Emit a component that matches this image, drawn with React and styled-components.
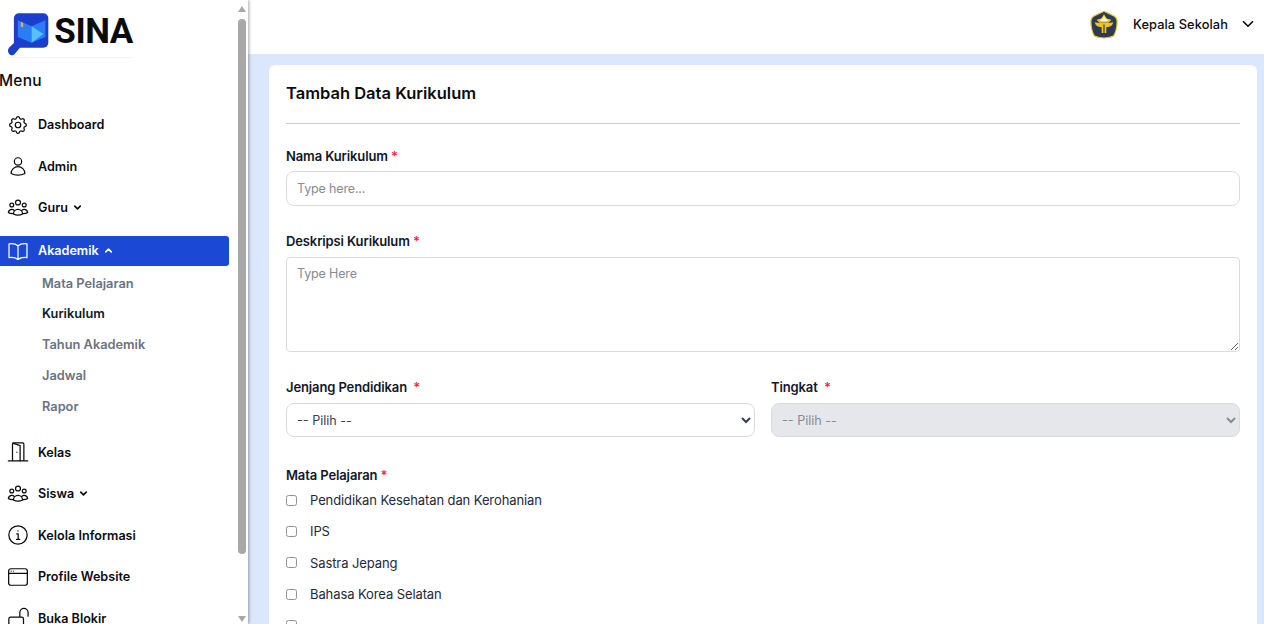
import styled, { createGlobalStyle } from 'styled-components'
import { ChevronDown, ChevronUp } from 'lucide-react'

const GlobalStyle = createGlobalStyle`
    * {
        box-sizing: border-box;
    }

    html, body {
        margin: 0;
        height: 100%;
        overflow: hidden;
        font-family: "Inter", "Liberation Sans", sans-serif;
        color: #0b0b0f;
    }
`

const Icons = {
    gear: (
        <>
            <path d="M10.3 4.3c.4-1.8 3-1.8 3.4 0a1.7 1.7 0 0 0 2.6 1.1c1.5-.9 3.3.8 2.4 2.4a1.7 1.7 0 0 0 1 2.5c1.900.5 1.900 3 0 3.400a1.700 1.700 0 0 0-1 2.600c.9 1.500-.9 3.300-2.400 2.400a1.700 1.700 0 0 0-2.600 1c-.4 1.900-3 1.900-3.400 0a1.700 1.700 0 0 0-2.600-1c-1.500.9-3.300-.9-2.400-2.400a1.700 1.700 0 0 0-1-2.600c-1.900-.4-1.900-2.900 0-3.400a1.700 1.700 0 0 0 1-2.500c-.9-1.600.9-3.300 2.400-2.400a1.700 1.700 0 0 0 2.600-1.100Z" />
            <circle cx="12" cy="12" r="3" />
        </>
    ),
    user: (
        <>
            <circle cx="12" cy="7" r="4" />
            <path d="M4.500 20.100a7.500 7.500 0 0 1 15 0c-2 1.200-4.600 1.900-7.500 1.900s-5.500-.7-7.500-1.900Z" />
        </>
    ),
    group: (
        <>
            <circle cx="12" cy="6" r="2.700" />
            <circle cx="5.200" cy="8.800" r="2.100" />
            <circle cx="18.800" cy="8.800" r="2.100" />
            <path d="M7 18.500a5 5 0 0 1 10 0c-1.400.8-3.100 1.300-5 1.300s-3.600-.5-5-1.300Z" />
            <path d="M6.800 18.200C4.700 18.300 2.700 17.800 1.500 16.800c.3-2 1.800-3.400 3.700-3.400 1 0 2 .4 2.600 1.100" />
            <path d="M17.200 18.200c2.100.1 4.100-.4 5.300-1.400-.3-2-1.800-3.400-3.700-3.400-1 0-2 .4-2.600 1.100" />
        </>
    ),
    book: (
        <path d="M12 6.200C10.200 4.800 7.600 4 4.800 4c-1 0-1.800.1-2.600.3v15c.8-.2 1.600-.3 2.600-.3 2.800 0 5.400.8 7.200 2.200m0-15c1.800-1.400 4.400-2.200 7.200-2.200 1 0 1.800.1 2.600.3v15c-.8-.2-1.600-.3-2.600-.3-2.800 0-5.400.8-7.200 2.200m0-15v15" />
    ),
    door: (
        <>
            <path d="M1.500 21.800h21M6 21.800V3.500c0-.8.600-1.400 1.400-1.400h9.600c.8 0 1.400.6 1.400 1.400v18.300" />
            <path d="M6.300 2.400 14.300 5v16.800M10.800 12.200h.01" />
        </>
    ),
    info: (
        <>
            <circle cx="12" cy="12" r="10" />
            <path d="M10.600 10.800H12.200v6M10.400 16.800h3.500M11.900 7.600h.1" />
        </>
    ),
    browser: (
        <>
            <rect x="1.800" y="3" width="20.400" height="18" rx="2.400" />
            <path d="M1.800 8h20.400" />
            <path d="M4.500 5.500h.01M7 5.500h.01" />
        </>
    ),
    unlock: (
        <path d="M14 11V6a4.500 4.500 0 0 1 9 0v4M2 13a2 2 0 0 1 2-2h12a2 2 0 0 1 2 2v7a2 2 0 0 1-2 2H4a2 2 0 0 1-2-2Z" />
    ),
}

const menuTop = [
    { icon: 'gear', label: 'Dashboard' },
    { icon: 'user', label: 'Admin' },
    { icon: 'group', label: 'Guru', chevron: true },
]

const subMenu = ['Mata Pelajaran', 'Kurikulum', 'Tahun Akademik', 'Jadwal', 'Rapor']

const menuBottom = [
    { icon: 'door', label: 'Kelas' },
    { icon: 'group', label: 'Siswa', chevron: true },
    { icon: 'info', label: 'Kelola Informasi' },
    { icon: 'browser', label: 'Profile Website' },
    { icon: 'unlock', label: 'Buka Blokir' },
]

const subjects = [
    'Pendidikan Kesehatan dan Kerohanian',
    'IPS',
    'Sastra Jepang',
    'Bahasa Korea Selatan',
]

function MenuIcon({ name }) {
    return (
        <IconSvg viewBox="0 0 24 24">
            {Icons[name]}
        </IconSvg>
    )
}

function MenuEntry({ item }) {
    return (
        <MenuRow>
            <MenuIcon name={item.icon} />
            <span>{item.label}</span>
            {item.chevron && <ChevronDown size={11} strokeWidth={3.500} />}
        </MenuRow>
    )
}

function App() {
    return (
        <>
            <GlobalStyle />
            <Page>
                <Sidebar>
                    <LogoRow>
                        <svg width="42" height="43" viewBox="0 0 42 43">
                            <path d="M1.500 41.500c-2-2-2-5 0-7l6-5.500 5 5.500-5.500 6.500c-1.700 1.800-3.900 2.100-5.500.5Z" fill="#1b3fcb" />
                            <rect x="6" y="0" width="35" height="35" rx="5" fill="#1b3fcb" />
                            <path d="M10 7l14 6v17l-14-6Z" fill="#2b7df5" />
                            <path d="M24 13l14-6v17l-14 6Z" fill="#2b7df5" />
                            <path d="M24 13l12 8-12 9Z" fill="#55c0fc" />
                            <path d="M13 8.500l2.500 1v5l-1.200-1-1.300.3Z" fill="#f0a63a" />
                        </svg>
                        <LogoText>SINA</LogoText>
                    </LogoRow>
                    <MenuTitle>Menu</MenuTitle>
                    <MenuList>
                        {menuTop.map((item) => (
                            <MenuEntry key={item.label} item={item} />
                        ))}
                    </MenuList>
                    <ActiveRow>
                        <MenuIcon name="book" />
                        <span>Akademik</span>
                        <ChevronUp size={11} strokeWidth={3.500} />
                    </ActiveRow>
                    <SubList>
                        {subMenu.map((label) => (
                            <SubItem key={label} $current={label === 'Kurikulum'}>{label}</SubItem>
                        ))}
                    </SubList>
                    <MenuList>
                        {menuBottom.map((item) => (
                            <MenuEntry key={item.label} item={item} />
                        ))}
                    </MenuList>
                    <ScrollBar>
                        <ScrollArrow />
                        <ScrollThumb />
                        <ScrollArrow $down />
                    </ScrollBar>
                </Sidebar>
                <Main>
                    <Header>
                        <svg width="28" height="29" viewBox="0 0 30 30">
                            <path d="M15 .8 25 5.500c2.500 1.200 4 3.500 4 6.200 0 6-1.500 11.500-3.500 15.300-3 1.800-6.500 2.400-10.500 2.400s-7.500-.6-10.500-2.400C2.500 23.200 1 17.700 1 11.700c0-2.700 1.500-5 4-6.200Z" fill="#2b3a55" stroke="#e8c32a" strokeWidth="1.200" />
                            <path d="M15 4l3 4.500 5 1.500-3 3H10l-3-3 5-1.500Z" fill="#f0c419" />
                            <path d="M15 6l1.800 3.200 2.700 1-1.500 1.300h-6l-1.500-1.300 2.700-1Z" fill="#f7f4e2" />
                            <path d="M5 12.500l4.500 1h11l4.500-1-1 2.500c-1 2-4 3-6.500 3v6h-5v-6c-2.500 0-5.500-1-6.500-3Z" fill="#f0c419" />
                            <path d="M14.400 15h1.200v9h-1.200Z" fill="#2b3a55" />
                        </svg>
                        <UserName>Kepala Sekolah</UserName>
                        <ChevronDown size={18} strokeWidth={2.200} />
                    </Header>
                    <Content>
                        <Card>
                            <CardTitle>Tambah Data Kurikulum</CardTitle>
                            <Divider />
                            <Field>
                                <Label>Nama Kurikulum <Req>*</Req></Label>
                                <TextInput placeholder="Type here..." readOnly />
                            </Field>
                            <Field>
                                <Label>Deskripsi Kurikulum <Req>*</Req></Label>
                                <TextArea placeholder="Type Here" readOnly />
                            </Field>
                            <SelectGrid>
                                <div>
                                    <Label>Jenjang Pendidikan <Req>&nbsp;*</Req></Label>
                                    <Select defaultValue="">
                                        <option value="">-- Pilih --</option>
                                    </Select>
                                </div>
                                <div>
                                    <Label>Tingkat <Req>&nbsp;*</Req></Label>
                                    <Select defaultValue="" disabled>
                                        <option value="">-- Pilih --</option>
                                    </Select>
                                </div>
                            </SelectGrid>
                            <Label>Mata Pelajaran <Req>*</Req></Label>
                            <CheckList>
                                {subjects.map((subject) => (
                                    <CheckRow key={subject}>
                                        <CheckBox type="checkbox" readOnly />
                                        <span>{subject}</span>
                                    </CheckRow>
                                ))}
                                <CheckRow>
                                    <CheckBox type="checkbox" readOnly />
                                </CheckRow>
                            </CheckList>
                        </Card>
                    </Content>
                </Main>
            </Page>
        </>
    )
}

const Page = styled.div`
    display: flex;
    height: 100vh;
    overflow: hidden;
    background-color: #dbe7fd;
`

const Sidebar = styled.aside`
    position: relative;
    flex: 0 0 248px;
    height: 100%;
    overflow: hidden;
    background-color: #fff;
    box-shadow: 1px 0 3px rgba(0, 0, 0, .35);
    z-index: 2;
`

const ScrollBar = styled.div`
    position: absolute;
    top: 0;
    right: 2px;
    bottom: 0;
    width: 8px;
    display: flex;
    flex-direction: column;
    align-items: center;
    justify-content: space-between;
`

const ScrollArrow = styled.div`
    flex: none;
    width: 0;
    height: 0;
    margin: ${(props) => (props.$down ? '62px 0 2px' : '6px 0 0')};
    border-left: 4.500px solid transparent;
    border-right: 4.500px solid transparent;
    border-bottom: ${(props) => (props.$down ? '0' : '6px solid #a8a8a8')};
    border-top: ${(props) => (props.$down ? '6px solid #a8a8a8' : '0')};
`

const ScrollThumb = styled.div`
    flex: none;
    width: 8px;
    height: 535px;
    margin-top: 7px;
    border-radius: 4px;
    background-color: #a8a8a8;
`

const LogoRow = styled.div`
    display: flex;
    align-items: flex-start;
    width: 125px;
    height: 44px;
    margin: 13px 0 0 8px;
    gap: 5px;
    box-sizing: content-box;
    border-bottom: 1px solid #f4f4f4;
`

const LogoText = styled.span`
    margin-top: -1px;
    font-family: "Roboto", "Liberation Sans", sans-serif;
    font-size: 35px;
    line-height: 40px;
    font-weight: 700;
    letter-spacing: -.4px;
    color: #0a0a0a;
`

const MenuTitle = styled.h2`
    margin: 12px 0 12px;
    font-size: 15.500px;
    line-height: 22px;
    font-weight: 500;
    letter-spacing: .2px;
    text-indent: -1px;
`

const MenuList = styled.nav`
    display: flex;
    flex-direction: column;
`

const MenuRow = styled.a`
    display: flex;
    align-items: center;
    height: 41.500px;
    padding-left: 7px;
    font-size: 12.600px;
    font-weight: 600;

    > span {
        margin-left: 9px;
    }

    > svg:last-child:not(:first-child) {
        margin-left: 4px;
    }
`

const ActiveRow = styled(MenuRow)`
    width: 229px;
    height: 30px;
    margin-top: 7px;
    border-radius: 0 3px 3px 0;
    background-color: #1b49d6;
    color: #fff;
`

const IconSvg = styled.svg`
    flex: none;
    width: 22px;
    height: 22px;
    fill: none;
    stroke: currentColor;
    stroke-width: 1.350;
    stroke-linecap: round;
    stroke-linejoin: round;
`

const SubList = styled.ul`
    margin: 3px 0 9px;
    padding: 0 0 0 42px;
    list-style: none;
`

const SubItem = styled.li`
    height: 30.800px;
    font-size: 12.800px;
    line-height: 30.800px;
    font-weight: 600;
    color: ${(props) => (props.$current ? '#111827' : '#6b7280')};
`

const Main = styled.main`
    flex: 1;
    min-width: 0;
    display: flex;
    flex-direction: column;
`

const Header = styled.header`
    flex: 0 0 54px;
    display: flex;
    align-items: center;
    justify-content: flex-end;
    padding: 0 7px 6px 0;
    background-color: #fff;
`

const UserName = styled.span`
    margin: 0 11px 0 15px;
    font-size: 12.800px;
    font-weight: 500;
    letter-spacing: .1px;
`

const Content = styled.div`
    flex: 1;
    min-height: 0;
    overflow: hidden;
    padding: 11px 7px 0 21px;
`

const Card = styled.section`
    min-height: 700px;
    padding: 17px;
    border-radius: 6px;
    background-color: #fff;
`

const CardTitle = styled.h1`
    margin: 0;
    font-size: 16.500px;
    line-height: 22px;
    font-weight: 600;
`

const Divider = styled.hr`
    height: 1px;
    margin: 19px 0 23px;
    border: 0;
    background-color: #c9cbd0;
`

const Field = styled.div`
    margin-bottom: 26px;
`

const Label = styled.label`
    display: block;
    margin-bottom: 6px;
    font-size: 13px;
    line-height: 18px;
    font-weight: 600;
    letter-spacing: -.12px;
    color: #111827;
`

const Req = styled.span`
    color: #ef2b3d;
`

const TextInput = styled.input`
    display: block;
    width: 100%;
    height: 35px;
    padding: 0 10px;
    border: 1px solid #d9dbe0;
    border-radius: 8px;
    font: 400 12.500px "Inter", sans-serif;
    letter-spacing: -.15px;
    outline: none;

    &::placeholder {
        color: #868b94;
    }
`

const TextArea = styled.textarea`
    display: block;
    width: 100%;
    height: 95px;
    margin-top: 7px;
    padding: 8px 10px;
    border: 1px solid #d9dbe0;
    border-radius: 4px;
    font: 400 12.500px "Inter", sans-serif;
    letter-spacing: -.15px;
    outline: none;

    &::placeholder {
        color: #868b94;
    }
`

const SelectGrid = styled.div`
    display: grid;
    grid-template-columns: 1fr 1fr;
    gap: 16px;
    margin-bottom: 29px;
`

const Select = styled.select`
    display: block;
    width: 100%;
    height: 34px;
    margin-top: 7px;
    padding: 0 6px;
    border: 1px solid #d9dbe0;
    border-radius: 8px;
    background-color: ${(props) => (props.disabled ? '#e5e7eb' : '#fff')};
    color: ${(props) => (props.disabled ? '#868b94' : '#374151')};
    font: 400 12.600px "Inter", sans-serif;
    opacity: 1;
`

const CheckList = styled.div`
    display: flex;
    flex-direction: column;
    gap: 13.400px;
    margin-top: 7px;
`

const CheckRow = styled.label`
    display: flex;
    align-items: center;
    height: 18px;
    font-size: 13px;
    letter-spacing: -.1px;
    color: #1f2937;
`

const CheckBox = styled.input`
    appearance: none;
    width: 11px;
    height: 11px;
    margin: 0 13px 0 0;
    flex: none;
    border: 1.500px solid #8f9195;
    border-radius: 2.500px;
    background-color: #fff;
`

export default App
